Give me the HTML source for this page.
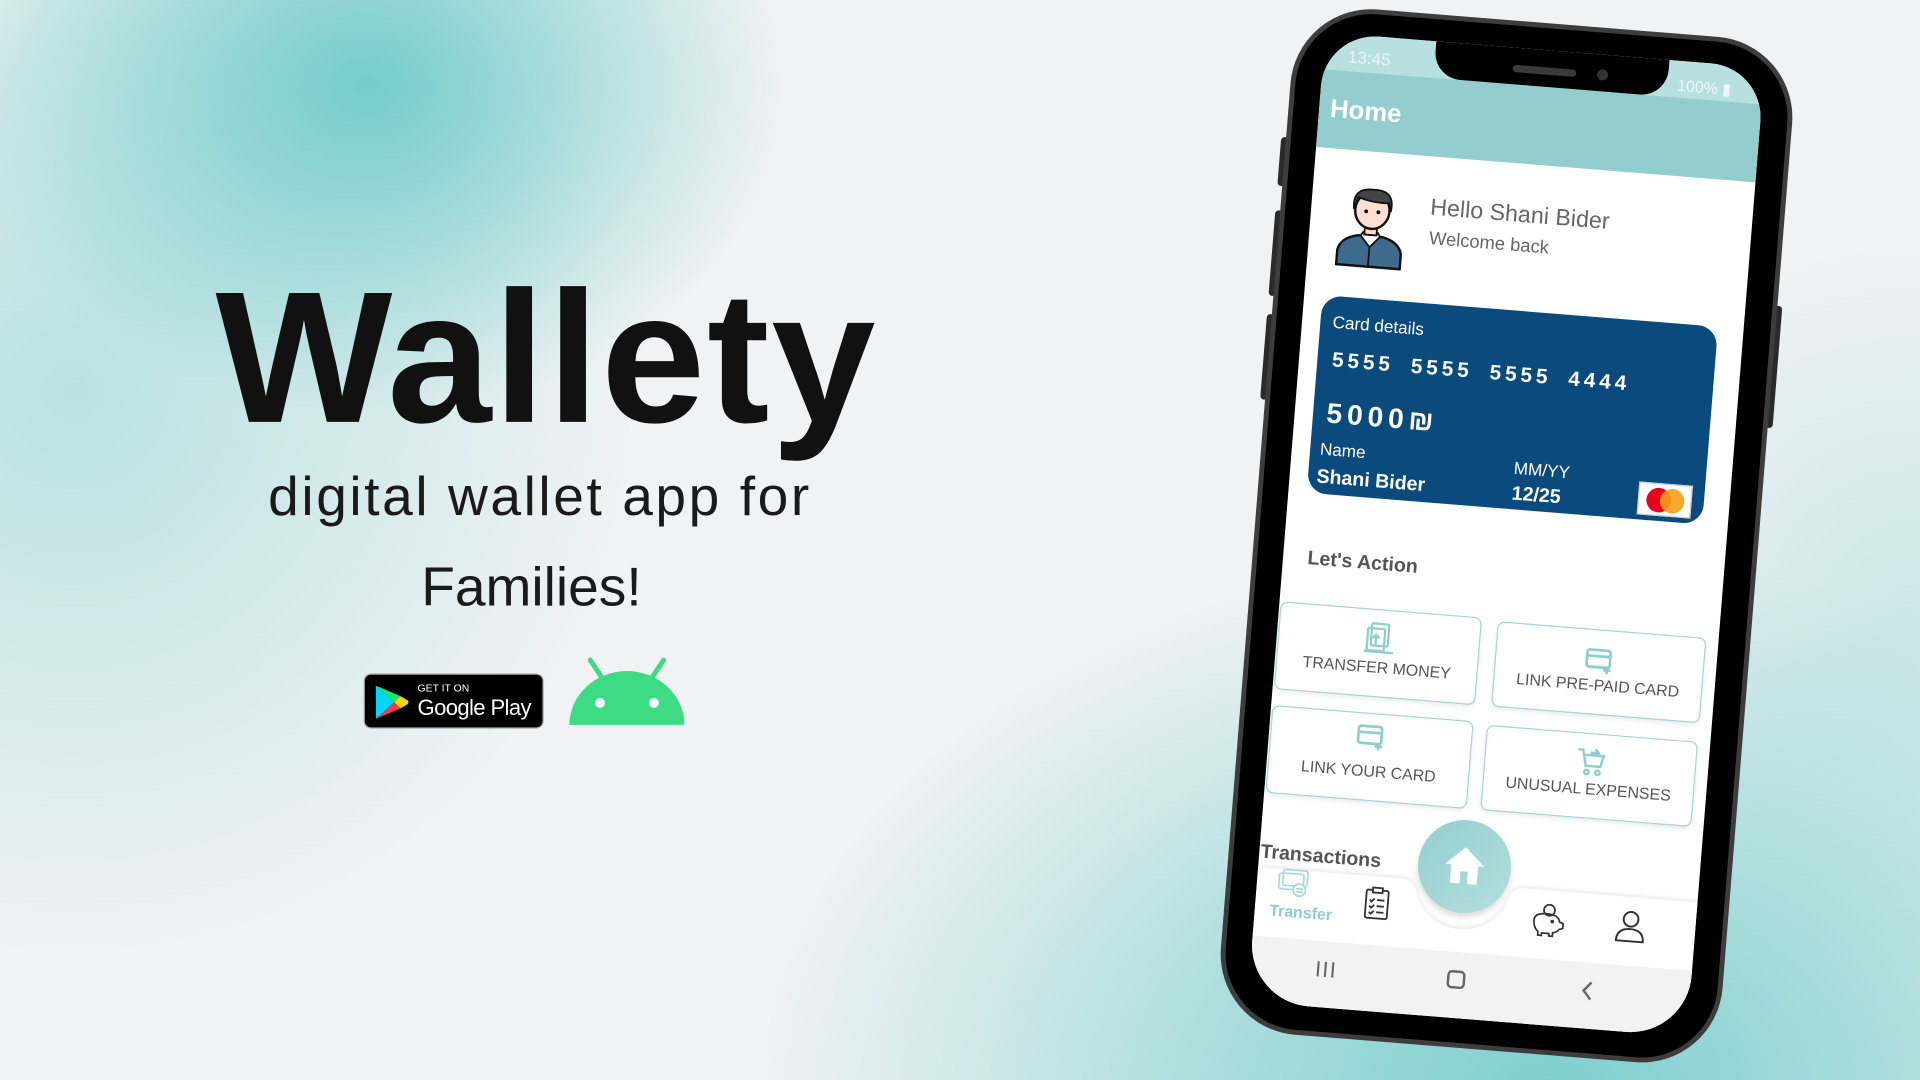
<!DOCTYPE html>
<html><head><meta charset="utf-8"><style>
*{margin:0;padding:0;box-sizing:border-box}
body{width:1920px;height:1080px;overflow:hidden;background:#f0f2f3;font-family:"Liberation Sans",sans-serif}
#s{position:absolute;left:0;top:0;width:1568px;height:882px;transform:scale(1.22449);transform-origin:0 0;overflow:hidden;
background:
radial-gradient(ellipse 340px 270px at 300px 70px,rgba(110,202,202,.95),rgba(110,202,202,.55) 45%,rgba(140,210,210,0) 100%),
radial-gradient(ellipse 460px 460px at 60px 320px,rgba(150,215,215,.6),rgba(150,215,215,0) 100%),
radial-gradient(ellipse 650px 440px at 1270px 890px,rgba(120,205,205,.95),rgba(130,208,208,.6) 45%,rgba(140,210,210,0) 100%),
radial-gradient(ellipse 300px 300px at 1560px 500px,rgba(150,215,215,.4),rgba(150,215,215,0) 100%),
#f0f2f3}
.a{position:absolute}
.t{position:absolute;white-space:nowrap;line-height:1;transform:translateY(-50%)}
#phone{position:absolute;left:1017px;top:17px;width:412px;height:840px;transform-origin:206px 418px;transform:rotate(4.6deg)}
.frame{position:absolute;left:8px;top:0;width:411px;height:840px;background:#000;border:4px solid #3d3d3d;border-radius:66px}
.btn{position:absolute;background:#2a2a2a;width:6px;border-radius:3px}
#scr{position:absolute;left:33px;top:22px;width:360px;height:794px;background:#fff;border-radius:44px 44px 50px 50px;overflow:hidden}
.box{position:absolute;border:1.5px solid #a4d6d6;border-radius:6px;background:#fff;box-shadow:0 2px 4px rgba(0,0,0,.08)}
.box span{position:absolute;left:0;right:0;text-align:center;font-size:13px;color:#555;bottom:16px}
.box svg{position:absolute;left:50%;transform:translateX(-50%)}
</style></head><body><div id="s">

<div class="t" style="left:176px;top:292px;font-size:153px;font-weight:bold;color:#111;letter-spacing:1.5px">Wallety</div>
<div class="t" style="left:219px;top:405px;font-size:45px;color:#1a1a1a;letter-spacing:2.1px">digital wallet app for</div>
<div class="t" style="left:344px;top:479px;font-size:45px;color:#1a1a1a">Families!</div>

<div class="a" style="left:297px;top:550px;width:147px;height:45px;background:#000;border:1.5px solid #a6a6a6;border-radius:6px">
<svg class="a" style="left:8px;top:8px" width="28" height="29" viewBox="0 0 28 29"><path d="M1 1 L16 14.5 L1 28 Z" fill="#00d7fe"/><path d="M1 1 L16 14.5 L21 9.5 Z" fill="#00f076"/><path d="M1 28 L16 14.5 L21 19.5 Z" fill="#f83b4e"/><path d="M16 14.5 L21 9.5 L27 13 Q28 14.5 27 16 L21 19.5 Z" fill="#ffd500"/></svg>
<div class="t" style="left:43px;top:11px;font-size:8.5px;color:#fff">GET IT ON</div>
<div class="t" style="left:43px;top:27px;font-size:18px;color:#fff;letter-spacing:-.5px">Google Play</div>
</div>
<svg class="a" style="left:462px;top:536px" width="100" height="58" viewBox="0 0 100 58"><line x1="20" y1="3" x2="30" y2="18" stroke="#3ddc84" stroke-width="4" stroke-linecap="round"/><line x1="80" y1="3" x2="70" y2="18" stroke="#3ddc84" stroke-width="4" stroke-linecap="round"/><path d="M3 56 A47 44 0 0 1 97 56 Z" fill="#3ddc84"/><circle cx="28" cy="38" r="4" fill="#fff"/><circle cx="72" cy="38" r="4" fill="#fff"/></svg>

<div id="phone">
<div class="btn" style="left:4px;top:110px;height:40px"></div>
<div class="btn" style="left:4px;top:170px;height:70px"></div>
<div class="btn" style="left:4px;top:255px;height:70px"></div>
<div class="btn" style="left:417px;top:215px;height:100px"></div>
<div class="frame"></div>
<div id="scr">
 <div class="a" style="left:0;top:0;width:360px;height:30px;background:#b8e0e0"></div>
 <div class="a" style="left:0;top:30px;width:360px;height:64px;background:#93cdcd"></div>
 <div class="t" style="left:20px;top:18px;font-size:14px;color:#e8f6f6">13:45</div>
 <div class="t" style="left:290px;top:20px;font-size:13px;color:#eef8f8">100% ▮</div>
 <div class="a" style="left:91px;top:-2px;width:191px;height:32px;background:#000;border-radius:0 0 22px 22px"></div>
 <div class="a" style="left:155px;top:14px;width:52px;height:6px;background:#3a3a3a;border-radius:3px"></div>
 <div class="a" style="left:224px;top:12px;width:9px;height:9px;background:#333;border-radius:50%"></div>
 <div class="t" style="left:9px;top:62px;font-size:21px;color:#fff;font-weight:bold">Home</div>

 <svg class="a" style="left:20px;top:120px" width="60" height="70" viewBox="0 0 60 70"><path d="M4 68 L4 56 Q6 46 20 43 L40 43 Q54 46 56 56 L56 68 Z" fill="#3e6a8c" stroke="#111" stroke-width="2"/><path d="M22 43 L30 52 L38 43 L36 40 L24 40 Z" fill="#fff" stroke="#111" stroke-width="1.5"/><line x1="30" y1="52" x2="30" y2="68" stroke="#111" stroke-width="1.5"/><rect x="25" y="32" width="10" height="10" fill="#fdd9c8" stroke="#111" stroke-width="1.5"/><ellipse cx="30" cy="22" rx="14" ry="15" fill="#fde0d2" stroke="#111" stroke-width="2"/><path d="M15 22 Q12 4 30 5 Q48 4 45 22 L43 15 Q30 16 18 12 Z" fill="#444" stroke="#111" stroke-width="1.5"/><circle cx="25" cy="23" r="1.6" fill="#111"/><circle cx="35" cy="23" r="1.6" fill="#111"/></svg>
 <div class="t" style="left:97px;top:136px;font-size:19px;color:#666">Hello Shani Bider</div>
 <div class="t" style="left:98px;top:161px;font-size:15px;color:#666">Welcome back</div>

 <div class="a" style="left:15px;top:214px;width:324px;height:162px;background:#0b4a7d;border-radius:16px;color:#fff">
  <div class="t" style="left:10px;top:21px;font-size:14px">Card details</div>
  <div class="t" style="left:12px;top:52px;font-size:17px;font-weight:bold;letter-spacing:3.2px;word-spacing:6px">5555 5555 5555 4444</div>
  <div class="t" style="left:11px;top:96px;font-size:23px;font-weight:bold;letter-spacing:4px">5000₪</div>
  <div class="t" style="left:8px;top:125px;font-size:14px">Name</div>
  <div class="t" style="left:7px;top:149px;font-size:16px;font-weight:bold">Shani Bider</div>
  <div class="t" style="left:167px;top:128px;font-size:14px">MM/YY</div>
  <div class="t" style="left:167px;top:150px;font-size:16px;font-weight:bold">12/25</div>
  <div class="a" style="left:270px;top:131px;width:44px;height:27px;background:#fff;border:1px solid #ccc">
   <div class="a" style="left:6px;top:3px;width:20px;height:20px;border-radius:50%;background:#eb001b"></div>
   <div class="a" style="left:17px;top:3px;width:20px;height:20px;border-radius:50%;background:#f79e1b;opacity:.9"></div>
  </div>
 </div>

 <div class="t" style="left:20px;top:430px;font-size:16px;font-weight:bold;color:#555">Let's Action</div>

 <div class="box" style="left:1px;top:466px;width:165px;height:72px"><svg style="top:9px" width="28" height="28" viewBox="0 0 28 28" fill="none" stroke="#8fcccc" stroke-width="1.8"><rect x="7" y="2" width="14" height="18" rx="1"/><rect x="4" y="6" width="14" height="18" rx="1"/><path d="M11 20 V11 M8 14 L11 11 L14 14"/><path d="M2 25 H26"/></svg><span>TRANSFER MONEY</span></div>
 <div class="box" style="left:179px;top:468px;width:171px;height:70px"><svg style="top:14px" width="26" height="22" viewBox="0 0 26 22" fill="none" stroke="#8fcccc" stroke-width="2.2"><rect x="2" y="2" width="19" height="14" rx="2"/><path d="M2 7 H21"/><path d="M19 15 V21 M16 18 H22"/></svg><span>LINK PRE-PAID CARD</span></div>
 <div class="box" style="left:1px;top:551px;width:165px;height:72px"><svg style="top:8px" width="26" height="22" viewBox="0 0 26 22" fill="none" stroke="#8fcccc" stroke-width="2.2"><rect x="2" y="2" width="19" height="14" rx="2"/><path d="M2 7 H21"/><path d="M19 15 V21 M16 18 H22"/></svg><span>LINK YOUR CARD</span></div>
 <div class="box" style="left:177px;top:553px;width:173px;height:70px"><svg style="top:10px" width="26" height="26" viewBox="0 0 26 26" fill="none" stroke="#8fcccc" stroke-width="2"><path d="M2 3 H6 L9 16 H21 L23 7 H8"/><circle cx="10" cy="21" r="1.8"/><circle cx="19" cy="21" r="1.8"/><path d="M12 5 H19 M16 2 L19 5 L16 8"/></svg><span>UNUSUAL EXPENSES</span></div>

 <div class="t" style="left:1px;top:672px;font-size:16px;font-weight:bold;color:#555">Transactions</div>

 <svg class="a" style="left:0;top:660px" width="360" height="90" viewBox="0 0 360 90"><defs><filter id="f" x="-10%" y="-30%" width="120%" height="160%"><feDropShadow dx="0" dy="-1" stdDeviation="2" flood-opacity=".12"/></filter></defs><path d="M0 24 H118 Q128 24 130 34 A40 40 0 0 0 206 34 Q208 24 218 24 H360 V90 H0 Z" fill="#fff" filter="url(#f)"/></svg>
 <div class="a" style="left:130px;top:632px;width:76px;height:76px;border-radius:50%;background:linear-gradient(135deg,#93cfcf,#b5dede);box-shadow:0 3px 5px rgba(0,0,0,.15)"></div>
 <svg class="a" style="left:150px;top:652px" width="36" height="34" viewBox="0 0 36 34"><path d="M18 2 L34 17 H29 V32 H21 V22 H15 V32 H7 V17 H2 Z" fill="#fff"/></svg>

 <svg class="a" style="left:17px;top:683px" width="26" height="24" viewBox="0 0 26 24" fill="none" stroke="#a8d8d8" stroke-width="1.4"><rect x="1" y="4" width="20" height="13" rx="2"/><rect x="4" y="1" width="20" height="13" rx="2"/><circle cx="18" cy="17" r="5" fill="#fff"/><path d="M15 16 H21 M15 18.5 H21"/></svg>
 <div class="t" style="left:12px;top:718px;font-size:13px;font-weight:bold;color:#8fcccc">Transfer</div>
 <svg class="a" style="left:88px;top:692px" width="22" height="28" viewBox="0 0 22 28" fill="none" stroke="#333" stroke-width="1.5"><rect x="2" y="3" width="18" height="23" rx="1.5"/><rect x="7" y="1" width="8" height="4" fill="#fff"/><path d="M5 11 L6.5 12.5 L9 10 M11 11 H17 M5 16 L6.5 17.5 L9 15 M11 16 H17 M5 21 L6.5 22.5 L9 20 M11 21 H17"/></svg>
 <svg class="a" style="left:224px;top:694px" width="30" height="28" viewBox="0 0 30 28" fill="none" stroke="#333" stroke-width="1.4"><circle cx="16" cy="6" r="4.5"/><path d="M4 15 Q4 9 14 9 Q24 9 25 15 L28 16 V20 L25 21 Q23 24 20 24 V27 H17 V25 H11 V27 H8 V24 Q4 21 4 15 Z"/><circle cx="19" cy="15" r=".8" fill="#333"/></svg>
 <svg class="a" style="left:294px;top:694px" width="26" height="28" viewBox="0 0 26 28" fill="none" stroke="#333" stroke-width="1.6"><circle cx="13" cy="8" r="6"/><path d="M2 26 Q2 16 13 16 Q24 16 24 26 Z"/></svg>

 <div class="a" style="left:0;top:740px;width:360px;height:60px;background:#f2f2f2"></div>
 <div class="t" style="left:53px;top:763px;font-size:18px;color:#666;letter-spacing:1px">III</div>
 <div class="a" style="left:161px;top:755px;width:15px;height:15px;border:2px solid #666;border-radius:4px"></div>
 <svg class="a" style="left:270px;top:754px" width="12" height="18" viewBox="0 0 12 18"><path d="M9 2 L3 9 L9 16" fill="none" stroke="#666" stroke-width="2"/></svg>
</div>
</div>
</div></body></html>
